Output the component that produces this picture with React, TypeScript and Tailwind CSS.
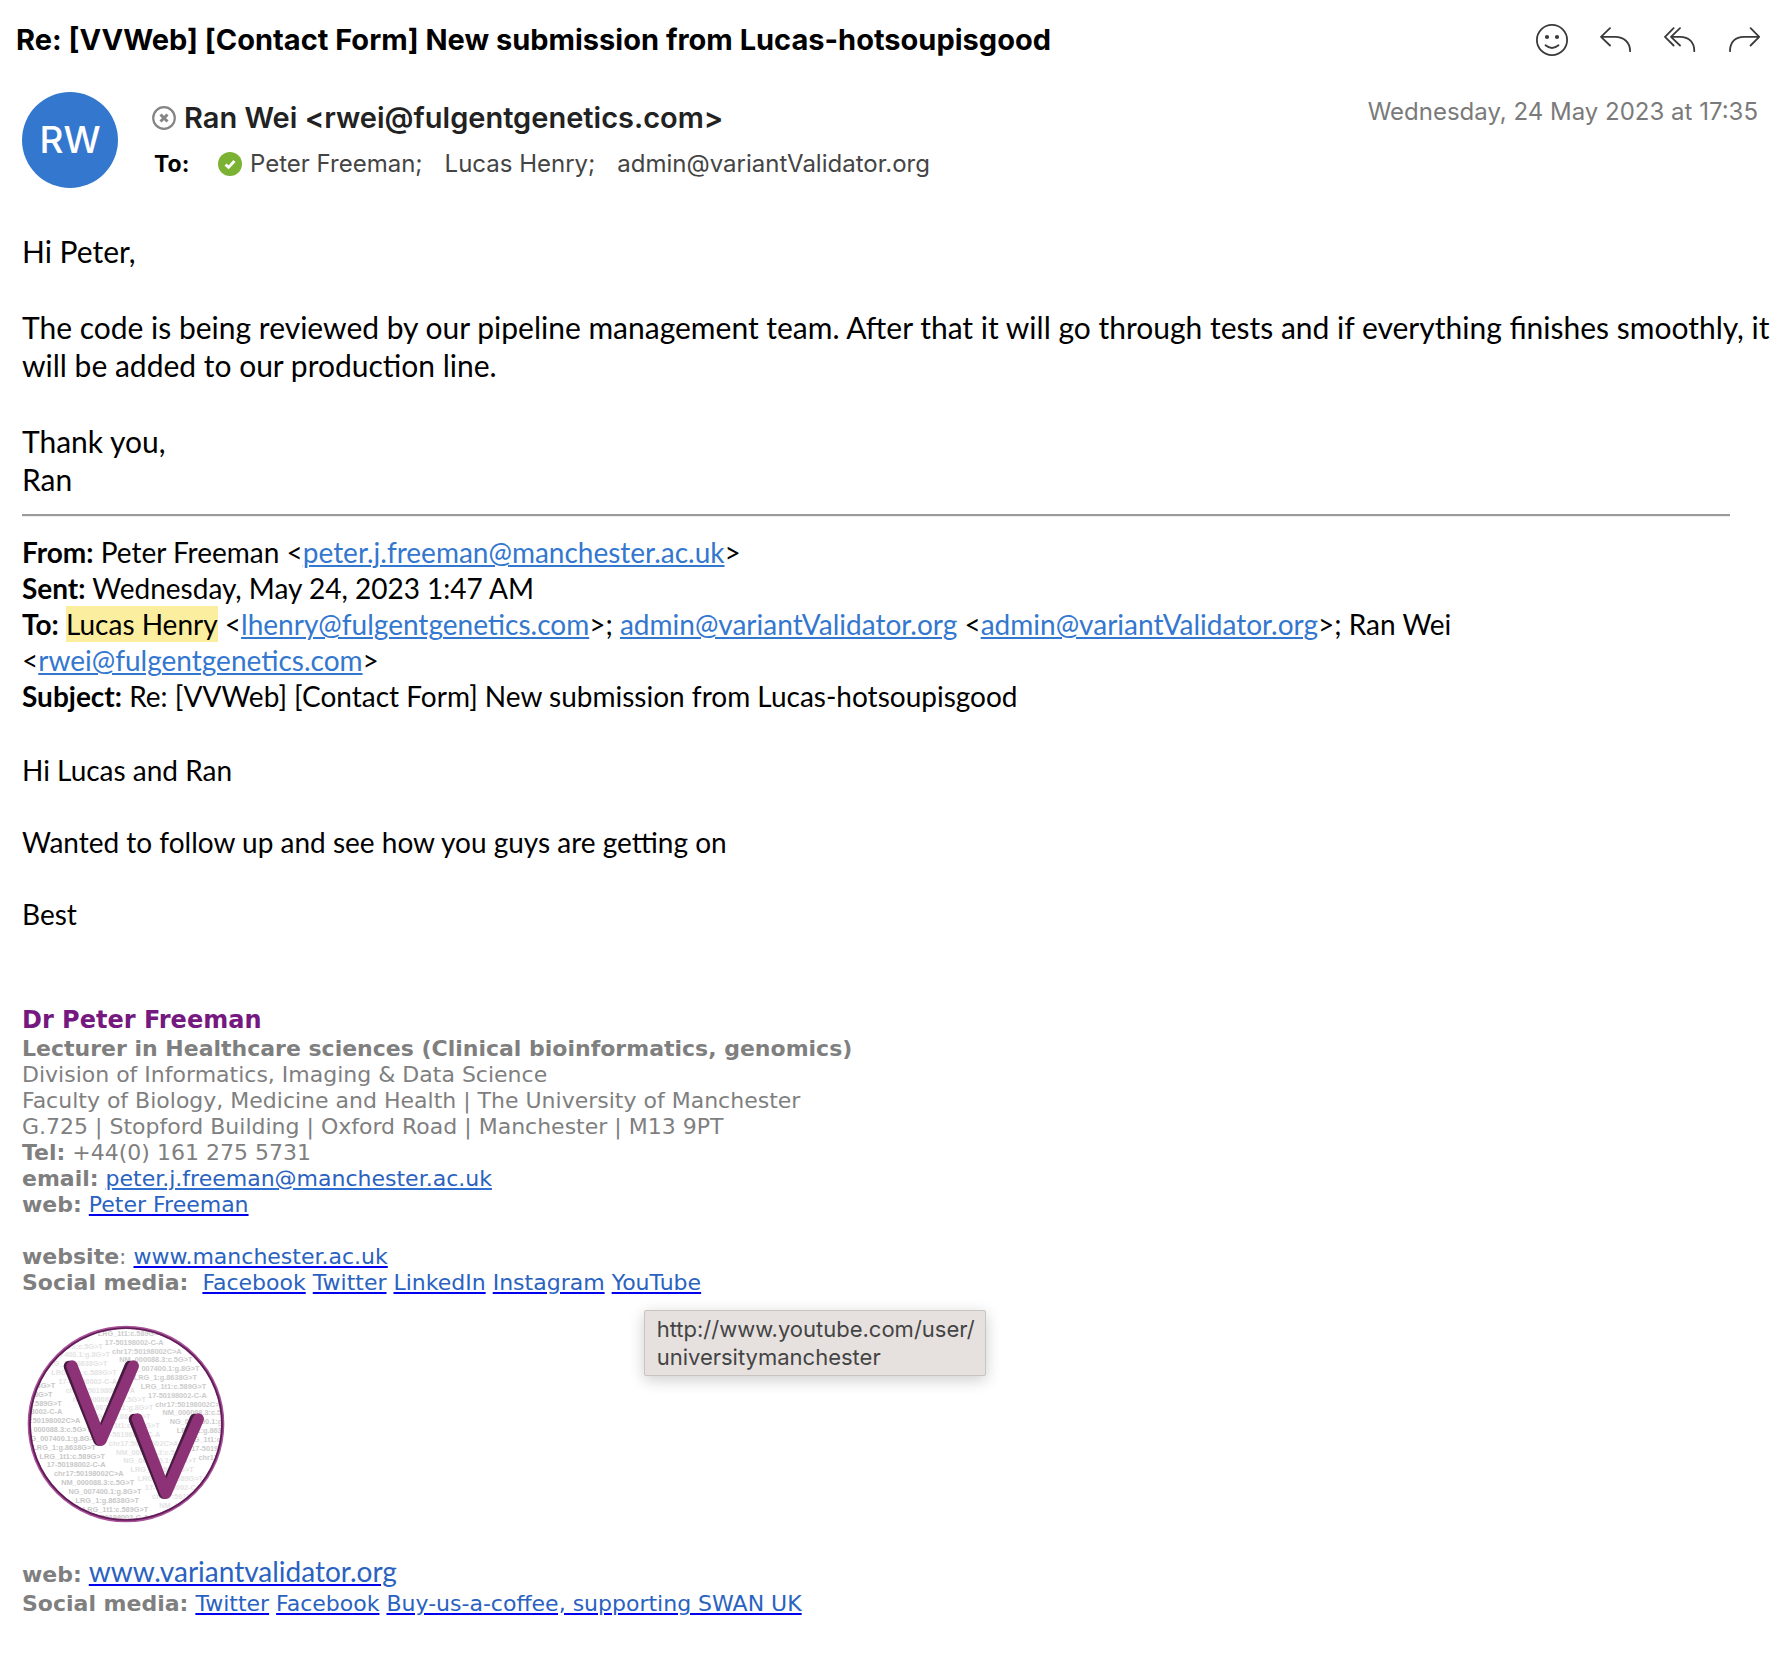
import type { ReactNode } from "react";

const VARIANTS = [
  "17-50198002-C-A",
  "chr17:50198002C>A",
  "NM_000088.3:c.5G>T",
  "NG_007400.1:g.8G>T",
  "LRG_1:g.8638G>T",
  "LRG_1t1:c.589G>T",
];

type Column = { x: number; y: number; rows: number; first: number; fill: string };

const COLUMNS: Column[] = [
  { x: 89, y: 145, rows: 19, first: 2, fill: "#e4e4e4" },
  { x: -54, y: 263, rows: 16, first: 3, fill: "#c8c8c8" },
  { x: 293, y: 107, rows: 15, first: 5, fill: "#cccccc" },
];

function Logo() {
  return (
    <svg viewBox="78 71 600 600" className="size-50" role="img" aria-label="VariantValidator">
      <defs>
        <clipPath id="disc">
          <circle cx="378" cy="371" r="288" />
        </clipPath>
      </defs>
      <circle cx="378" cy="371" r="288" fill="#fff" />
      <g clipPath="url(#disc)" fontFamily="Liberation Sans, Arial, sans-serif" fontWeight="700" fontSize="22">
        {COLUMNS.map((c, k) =>
          Array.from({ length: c.rows }, (_, i) => (
            <text key={`${k}-${i}`} x={c.x + i * 21.6} y={c.y + i * 26.5} fill={c.fill}>
              {VARIANTS[(c.first + i) % 6]}
            </text>
          )),
        )}
      </g>
      <circle cx="378" cy="371" r="290" fill="none" stroke="#a8509a" strokeWidth="10" />
      <circle cx="378" cy="371" r="288" fill="none" stroke="#5d1c52" strokeWidth="5" />
      <g fill="none" strokeWidth="34" strokeLinecap="round" strokeLinejoin="round">
        <path d="M208 198 L297 420 L390 198 M403 357 L492 579 L585 357" stroke="#471b40" />
        <path d="M216 197 L303 420 L400 197 M412 356 L498 579 L595 356" stroke="#8e3278" />
      </g>
    </svg>
  );
}

function IconButton({ label, children }: { label: string; children: ReactNode }) {
  return (
    <button type="button" aria-label={label} className="size-8">
      <svg viewBox="0 0 32 32" className="size-8" fill="none" stroke="#3a3a3a" strokeWidth="1.8" strokeLinecap="round" strokeLinejoin="round">
        {children}
      </svg>
    </button>
  );
}

function MailLink({ children }: { children: string }) {
  return (
    <a href={`mailto:${children}`} className="text-[#3477cf] underline decoration-2 underline-offset-2">
      {children}
    </a>
  );
}

function SigLink({ href, children }: { href: string; children: ReactNode }) {
  return (
    <a href={href} className="text-[#2a62bf] underline decoration-[#0000ee] decoration-2 underline-offset-2">
      {children}
    </a>
  );
}

export default function App() {
  return (
    <main className="min-h-screen bg-white font-['Inter',sans-serif] text-black">
      <header>
        <div className="flex items-center justify-between pt-6 pr-[30px] pl-4">
          <h1 className="text-[29px] leading-8 font-bold">
            Re: [VVWeb] [Contact Form] New submission from Lucas-hotsoupisgood
          </h1>
          <div className="flex gap-8">
            <IconButton label="React">
              <circle cx="16" cy="16" r="15.1" />
              <circle cx="11" cy="13" r="2.1" fill="#3a3a3a" stroke="none" />
              <circle cx="21" cy="13" r="2.1" fill="#3a3a3a" stroke="none" />
              <path d="M9.5 21.3 Q16 26.6 22.5 21.3" />
            </IconButton>
            <IconButton label="Reply">
              <path d="M10 4.2 L1 12.8 L10 21.5 M1 12.8 H15 C24 12.8 30.1 18.5 30.1 27.2" />
            </IconButton>
            <IconButton label="Reply all">
              <path d="M9.6 4.2 L1 12.8 L9.6 21.5 M16 4.2 L7 12.8 L16 21.5 M7 12.8 H16 C25 12.8 30.3 18.5 30.3 27.2" />
            </IconButton>
            <IconButton label="Forward">
              <path d="M22.6 4.2 L31.2 12.8 L22.6 21.5 M31.2 12.8 H16 C7 12.8 2 18.5 2 27.2" />
            </IconButton>
          </div>
        </div>

        <div className="flex items-start pt-9 pr-8 pl-[22px]">
          <div className="flex size-24 items-center justify-center rounded-full bg-[#3377cf] text-[37px] font-medium text-white">
            RW
          </div>
          <div className="flex flex-1 flex-col gap-2 pt-2 pl-[34px]">
            <div className="flex items-center gap-2">
              <svg viewBox="0 0 24 24" className="size-6" fill="none" stroke="#858585">
                <circle cx="12" cy="12" r="10.8" strokeWidth="2.2" />
                <path d="M8.5 8.5 L15.5 15.5 M15.5 8.5 L8.5 15.5" strokeWidth="3" />
              </svg>
              <h2 className="text-[29px] leading-9 font-semibold text-[#222]">
                Ran Wei &lt;rwei@fulgentgenetics.com&gt;
              </h2>
            </div>
            <div className="flex items-center gap-[22px] text-[24px] leading-10 text-[#444]">
              <span className="flex items-center">
                <span className="w-[66px] pl-0.5 text-[23px] font-bold text-black">To:</span>
                <svg viewBox="0 0 24 24" className="mr-2 size-6">
                  <circle cx="12" cy="12" r="12" fill="#7cb234" />
                  <path d="M7.5 12.6 L10.6 15.4 L16.5 9" fill="none" stroke="#fff" strokeWidth="2.8" />
                </svg>
                Peter Freeman;
              </span>
              <span>Lucas Henry;</span>
              <span>admin@variantValidator.org</span>
            </div>
          </div>
          <time className="pt-1 text-[24px] leading-8 text-[#7a7a7a]">Wednesday, 24 May 2023 at 17:35</time>
        </div>
      </header>

      <article className="pt-11 pr-4 pl-[22px] font-['Lato',sans-serif]">
        <section className="text-[30px] leading-[38px]">
          <p>Hi Peter,</p>
          <br />
          <p>
            The code is being reviewed by our pipeline management team. After that it will go through tests and if
            everything finishes smoothly, it will be added to our production line.
          </p>
          <br />
          <p>Thank you,</p>
          <p>Ran</p>
        </section>

        <hr className="mt-4 mr-11 mb-[17px] border-t-2 border-b border-t-[#9a9a9a] border-b-[#eeeeee]" />

        <section className="text-[28px] leading-9">
          <p>
            <b>From:</b> Peter Freeman &lt;<MailLink>peter.j.freeman@manchester.ac.uk</MailLink>&gt;
          </p>
          <p>
            <b>Sent:</b> Wednesday, May 24, 2023 1:47 AM
          </p>
          <p>
            <b>To:</b> <mark className="inline-block bg-[#fcee9f]">Lucas Henry</mark> &lt;
            <MailLink>lhenry@fulgentgenetics.com</MailLink>&gt;; <MailLink>admin@variantValidator.org</MailLink> &lt;
            <MailLink>admin@variantValidator.org</MailLink>&gt;; Ran Wei
            <br />
            &lt;<MailLink>rwei@fulgentgenetics.com</MailLink>&gt;
          </p>
          <p>
            <b>Subject:</b> Re: [VVWeb] [Contact Form] New submission from Lucas-hotsoupisgood
          </p>
          <p className="pt-[38px]">Hi Lucas and Ran</p>
          <p className="pt-9">Wanted to follow up and see how you guys are getting on</p>
          <p className="pt-9">Best</p>
        </section>

        <footer className="pt-[74px] font-['DejaVu_Sans',sans-serif] text-[22px] leading-[26px] text-[#7f7f7f]">
          <p className="pb-0.5 text-[24px] leading-7 font-bold text-[#751880]">Dr Peter Freeman</p>
          <p className="font-bold">Lecturer in Healthcare sciences (Clinical bioinformatics, genomics)</p>
          <p>Division of Informatics, Imaging &amp; Data Science</p>
          <p>Faculty of Biology, Medicine and Health | The University of Manchester</p>
          <p>G.725 | Stopford Building | Oxford Road | Manchester | M13 9PT</p>
          <p>
            <b>Tel:</b> +44(0) 161 275 5731
          </p>
          <p>
            <b>email:</b>{" "}
            <a
              href="mailto:peter.j.freeman@manchester.ac.uk"
              className="text-[#2a62bf] underline decoration-[#2f6fd0] decoration-2 underline-offset-2"
            >
              peter.j.freeman@manchester.ac.uk
            </a>
          </p>
          <p>
            <b>web:</b> <SigLink href="#peter-freeman">Peter Freeman</SigLink>
          </p>
          <br />
          <p>
            <b>website</b>: <SigLink href="http://www.manchester.ac.uk">www.manchester.ac.uk</SigLink>
          </p>
          <p>
            <b>Social media:</b>&nbsp; <SigLink href="#facebook">Facebook</SigLink>{" "}
            <SigLink href="#twitter">Twitter</SigLink> <SigLink href="#linkedin">LinkedIn</SigLink>{" "}
            <SigLink href="#instagram">Instagram</SigLink>{" "}
            <span className="relative">
              <SigLink href="http://www.youtube.com/user/universitymanchester">YouTube</SigLink>
              <span
                role="tooltip"
                className="absolute top-10 left-8 w-[342px] rounded-xs border border-[#c8c4c2] bg-[#e6e1df] px-3 py-1 font-['Inter',sans-serif] text-[22px] leading-7 text-[#444] shadow-[0_4px_16px_rgba(0,0,0,0.2)]"
              >
                http://www.youtube.com/user/
                <br />
                universitymanchester
              </span>
            </span>
          </p>
          <div className="pt-7 pb-[31px] pl-1">
            <Logo />
          </div>
          <p className="leading-8">
            <b>web:</b>{" "}
            <span className="font-['Lato',sans-serif] text-[28px]">
              <SigLink href="http://www.variantvalidator.org">www.variantvalidator.org</SigLink>
            </span>
          </p>
          <p>
            <b>Social media:</b> <SigLink href="#vv-twitter">Twitter</SigLink>{" "}
            <SigLink href="#vv-facebook">Facebook</SigLink>{" "}
            <SigLink href="#coffee">Buy-us-a-coffee, supporting SWAN UK</SigLink>
          </p>
        </footer>
      </article>
    </main>
  );
}
